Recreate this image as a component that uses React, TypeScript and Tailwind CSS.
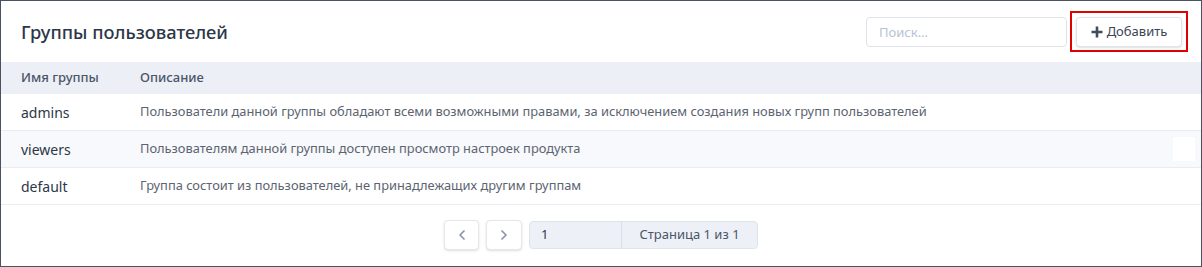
import { ChevronLeft, ChevronRight } from "lucide-react";

interface Group {
  name: string;
  description: string;
}

const GROUPS: Group[] = [
  {
    name: "admins",
    description:
      "Пользователи данной группы обладают всеми возможными правами, за исключением создания новых групп пользователей",
  },
  {
    name: "viewers",
    description: "Пользователям данной группы доступен просмотр настроек продукта",
  },
  {
    name: "default",
    description: "Группа состоит из пользователей, не принадлежащих другим группам",
  },
];

export default function App() {
  return (
    <div className="w-[1202px] h-[267px] border border-[#4a5261] bg-white flex flex-col font-['Noto_Sans',sans-serif]">
      {/* Header */}
      <div className="h-[61px] flex items-center justify-between pl-5 pr-[19px]">
        <h1 className="text-[18.3px] text-[#2d3748] font-medium">Группы пользователей</h1>
        <div className="flex items-center gap-[9px]">
          <input
            placeholder="Поиск..."
            className="w-[201px] h-[30px] border border-[#dfe3ea] rounded px-3 text-[13px] placeholder:text-[#b8c2d3] outline-none"
          />
          <button className="relative w-[106px] h-[30px] border border-[#dfe3ea] rounded bg-white shadow-sm flex items-center justify-center gap-[4px] text-[13px] text-[#3b4556]">
            <span className="absolute -left-[7px] -right-[7px] -top-[7px] -bottom-[6px] border-2 border-[#e00000]" />
            <svg width="12" height="12" viewBox="0 0 12 12" className="text-[#434c5b]">
              <path d="M6 0.5v11M0.5 6h11" stroke="currentColor" strokeWidth="2.6" />
            </svg>
            Добавить
          </button>
        </div>
      </div>

      {/* Table */}
      <div className="flex h-[32px] items-center bg-[#ecf0f6] text-[13px] text-[#4a5568] font-medium">
        <div className="w-[139px] pl-5">Имя группы</div>
        <div>Описание</div>
      </div>
      {GROUPS.map((g, i) => (
        <div
          key={g.name}
          className={`flex h-[37px] items-center border-b border-[#e8edf4] ${
            i === 1 ? "bg-[#f7f9fc]" : "bg-white"
          }`}
        >
          <div className="w-[139px] pl-5 text-[14px] text-[#2d3748]">{g.name}</div>
          <div className="flex-1 text-[12.85px] text-[#5c6470]">{g.description}</div>
          {i === 1 && <div className="w-[22px] h-[24px] bg-white mr-[6px]" />}
        </div>
      ))}

      {/* Pagination */}
      <div className="flex-1 flex items-center justify-center gap-[7px] pb-[2px]">
        <button className="w-[35px] h-[30px] border border-[#e3e7ee] rounded bg-white shadow-sm flex items-center justify-center text-[#8a93a3]">
          <ChevronLeft className="w-4 h-4" strokeWidth={2.5} />
        </button>
        <button className="w-[36px] h-[30px] border border-[#e3e7ee] rounded bg-white shadow-sm flex items-center justify-center text-[#8a93a3]">
          <ChevronRight className="w-4 h-4" strokeWidth={2.5} />
        </button>
        <div className="flex h-[28px] w-[229px] border border-[#dfe4ec] rounded bg-[#edf1f7] text-[13px] text-[#4a5568]">
          <div className="w-[92px] border-r border-[#d9dfe8] pl-[11px] flex items-center text-[#2d3748]">1</div>
          <div className="flex-1 flex items-center justify-center">Страница 1 из 1</div>
        </div>
      </div>
    </div>
  );
}
